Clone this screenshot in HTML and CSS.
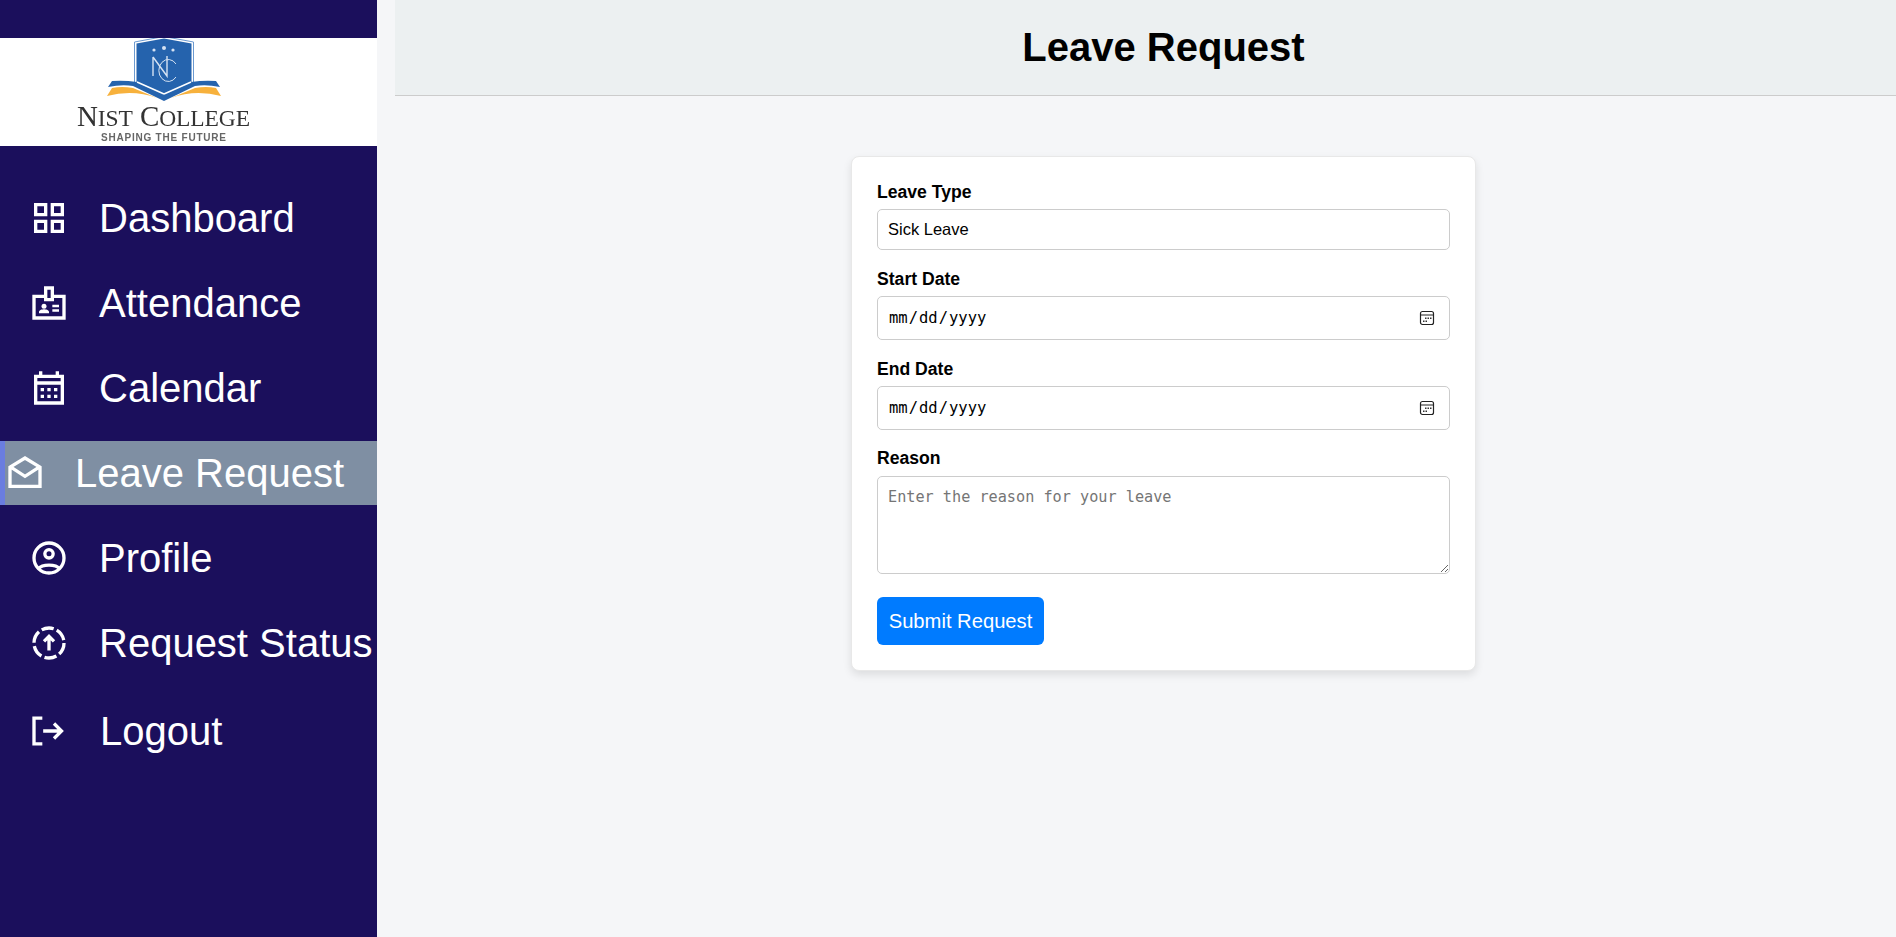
FILE: index.html
```html
<!DOCTYPE html>
<html lang="en">
<head>
    <meta charset="UTF-8">
    <title>Leave Request</title>
    <link rel="stylesheet" href="styles.css">
</head>
<body>
    <div class="layout">
        <aside class="sidebar">
            <div class="logo">
                <svg class="logo-img" width="210" height="108" viewBox="0 0 210 108">
                    <!-- shield -->
                    <path d="M74.500 4 L104 -1.500 L133.500 4 V45" fill="none" stroke="#6c9ad0" stroke-width="1"/>
                    <path d="M74.500 4 V45" fill="none" stroke="#6c9ad0" stroke-width="1"/>
                    <path d="M76.500 5.500 L104 0.500 L131.500 5.500 V44 L104 58 L76.500 44 Z" fill="#2563ad"/>
                    <circle cx="94" cy="12" r="1.600" fill="#d5e2f2"/>
                    <circle cx="104" cy="10" r="2" fill="#d5e2f2"/>
                    <circle cx="113" cy="12" r="1.600" fill="#d5e2f2"/>
                    <path d="M93 19 V38 M93 19 L107 38 V18" fill="none" stroke="#d5e2f2" stroke-width="1.400"/>
                    <path d="M116 26 A9.500 11 0 1 0 116 39" fill="none" stroke="#d5e2f2" stroke-width="1"/>
                    <!-- book -->
                    <path d="M52 43 Q64 42 77 44 L104 56 L131 44 Q144 42 156 43 L160 49 Q146 46 135 48 L104 63 L73 48 Q62 46 48 49 Z" fill="#2563ad"/>
                    <path d="M104 56 L77 44 M104 56 L131 44" stroke="#fff" stroke-width="1.500" fill="none"/>
                    <path d="M52 50 Q62 48 73 50 L97 60 Q73 51 47 58 Z M156 50 Q146 48 135 50 L111 60 Q135 51 161 58 Z" fill="#f7b13c"/>
                    <text class="logo-name" x="17" y="88" textLength="173">N<tspan class="logo-small">IST</tspan> C<tspan class="logo-small">OLLEGE</tspan></text>
                    <text class="logo-tag" x="41" y="103" textLength="125">SHAPING THE FUTURE</text>
                </svg>
            </div>
            <nav class="nav">
                <a class="nav-item" href="#">
                    <svg class="icon" viewBox="0 0 24 24"><path fill-rule="evenodd" d="M3 3h8v8H3V3zm2 2v4h4V5H5zm8-2h8v8h-8V3zm2 2v4h4V5h-4zM3 13h8v8H3v-8zm2 2v4h4v-4H5zm8-2h8v8h-8v-8zm2 2v4h4v-4h-4z"/></svg>
                    <span>Dashboard</span>
                </a>
                <a class="nav-item" href="#">
                    <svg class="icon" viewBox="0 0 24 24"><path fill-rule="evenodd" d="M2 22V7h7V2h6v5h7v15H2zm2-2h16V9h-5v2H9V9H4v11zm7-11h2V4h-2v5z"/><circle cx="9" cy="14" r="1.500"/><path d="M6 18.200v-.9c0-1 2-1.500 3-1.500s3 .5 3 1.500v.9H6zM14 13h4v1.500h-4zM14 15.800h4v1.500h-4z"/></svg>
                    <span>Attendance</span>
                </a>
                <a class="nav-item" href="#">
                    <svg class="icon" viewBox="0 0 24 24"><path fill-rule="evenodd" d="M3 22V4h3V2h2v2h8V2h2v2h3v18H3zm2-2h14V10H5v10zM5 8h14V6H5v2z"/><path d="M7 12h2v2H7zM11 12h2v2h-2zM15 12h2v2h-2zM7 16h2v2H7zM11 16h2v2h-2zM15 16h2v2h-2z"/></svg>
                    <span>Calendar</span>
                </a>
                <a class="nav-item nav-item-active" href="#">
                    <svg class="icon" viewBox="0 0 24 24"><path class="line" d="M3 8.500 12 3l9 5.500V20H3zM3.500 8.500 12 14l8.500-5.500"/></svg>
                    <span>Leave Request</span>
                </a>
                <a class="nav-item" href="#">
                    <svg class="icon" viewBox="0 0 24 24"><circle class="line" cx="12" cy="12" r="9"/><circle class="line" cx="12" cy="9.500" r="2.500"/><path class="line" d="M5.500 18.500C8 15.500 16 15.500 18.500 18.500"/></svg>
                    <span>Profile</span>
                </a>
                <a class="nav-item" href="#">
                    <svg class="icon" viewBox="0 0 24 24"><circle class="line dashed" cx="12" cy="12" r="9"/><path class="line" d="M12 16.500V8M9 11l3-3 3 3"/></svg>
                    <span>Request Status</span>
                </a>
                <a class="nav-item nav-item-logout" href="#">
                    <svg class="icon" viewBox="0 0 24 24"><path class="line" d="M8 4.300H3v15.400h5M8.500 12H19M15 7.500l4.500 4.500-4.500 4.500"/></svg>
                    <span>Logout</span>
                </a>
            </nav>
        </aside>

        <div class="main">
            <header class="page-header">
                <h1>Leave Request</h1>
            </header>
            <div class="content">
                <form class="card">
                    <div class="form-group">
                        <label for="type">Leave Type</label>
                        <input class="field field-text" type="text" id="type" value="Sick Leave">
                    </div>
                    <div class="form-group">
                        <label for="start">Start Date</label>
                        <input class="field field-date" type="date" id="start">
                    </div>
                    <div class="form-group form-group-tight">
                        <label for="end">End Date</label>
                        <input class="field field-date" type="date" id="end">
                    </div>
                    <div class="form-group">
                        <label class="label-wide" for="reason">Reason</label>
                        <textarea class="field field-area" id="reason" placeholder="Enter the reason for your leave"></textarea>
                    </div>
                    <button class="submit" type="submit">Submit Request</button>
                </form>
            </div>
        </div>
    </div>
</body>
</html>
```

FILE: styles.css
```css
* {
    box-sizing: border-box;
}
body {
    margin: 0;
    font-family: "Liberation Sans", Arial, sans-serif;
    background-color: #f5f6f8;
    color: #000;
}
.layout {
    display: flex;
    min-height: 100vh;
}

/* sidebar */
.sidebar {
    width: 377px;
    flex-shrink: 0;
    padding-top: 38px;
    background-color: #1b0f5c;
}
.logo {
    height: 108px;
    background: white;
    padding-left: 60px;
}
.logo-img {
    display: block;
    overflow: hidden;
    filter: blur(0.3px);
}
.logo-name {
    font-family: "Liberation Serif", serif;
    font-size: 29px;
    fill: #333;
}
.logo-small {
    font-size: 23.500px;
}
.logo-tag {
    font-family: "Liberation Sans", sans-serif;
    font-size: 10px;
    font-weight: bold;
    fill: #666;
}
.nav {
    display: flex;
    flex-direction: column;
    gap: 21px;
    margin-top: 40px;
}
.nav-item {
    display: flex;
    align-items: center;
    gap: 30px;
    height: 64px;
    padding-left: 29px;
    color: white;
    font-size: 40px;
    text-decoration: none;
    white-space: nowrap;
}
.nav-item-active {
    padding-left: 0;
    gap: 30px;
    border-left: 5px solid #6a7de0;
    background-color: #7f8fa3;
}
.nav-item-logout {
    margin-top: 3px;
    gap: 31px;
}
.icon {
    width: 40px;
    height: 40px;
    flex-shrink: 0;
    fill: white;
}
.line {
    fill: none;
    stroke: white;
    stroke-width: 2;
}
.dashed {
    stroke-dasharray: 7.400 2;
}

/* main */
.main {
    flex: 1;
    margin-left: 18px;
}
.page-header {
    height: 96px;
    padding-left: 36px;
    display: flex;
    align-items: center;
    justify-content: center;
    background-color: #ecf0f1;
    border-bottom: 1px solid #ccc;
}
h1 {
    margin: 0;
    font-size: 40px;
}
.content {
    padding: 60px 0 0 36px;
    display: flex;
    justify-content: center;
}
.card {
    width: 625px;
    height: 515px;
    padding: 25px;
    background: white;
    border-radius: 8px;
    box-shadow: 0 4px 8px rgba(0,0,0,0.1);
    border: 1px solid #e8e8e8;
}
.form-group {
    margin-bottom: 19px;
}
.form-group-tight {
    margin-bottom: 18px;
}
label {
    display: block;
    margin-bottom: 7px;
    font-size: 17.600px;
    font-weight: bold;
    line-height: 20px;
}
.label-wide {
    margin-bottom: 8px;
}
.field {
    display: block;
    width: 100%;
    padding: 10px;
    border: 1px solid #ccc;
    border-radius: 5px;
    background: white;
    color: #000;
}
.field-text {
    height: 41px;
    font-family: "Liberation Sans", Arial, sans-serif;
    font-size: 16.500px;
}
.field-date {
    height: 44px;
    font-family: "DejaVu Sans Mono", monospace;
    font-size: 15.500px;
}
.field-date::-webkit-calendar-picker-indicator {
    width: 16px;
    height: 16px;
    margin-right: 4px;
    padding: 0;
    background: url("data:image/svg+xml,%3Csvg xmlns='http://www.w3.org/2000/svg' viewBox='0 0 16 16'%3E%3Crect x='1.500' y='1.500' width='13' height='13' rx='2' fill='none' stroke='%23222' stroke-width='1.200'/%3E%3Cpath d='M2 5h12' stroke='%23222'/%3E%3Cpath d='M6 7.500h1.500V9H6zM8.500 7.500H10V9H8.500zM11 7.500h1.500V9H11zM4 10.500h1.500V12H4zM6.500 10.500H8V12H6.500z' fill='%23333'/%3E%3C/svg%3E") center / contain no-repeat;
}
.field-area {
    height: 98px;
    padding-top: 11px;
    font-family: "DejaVu Sans Mono", monospace;
    font-size: 15.200px;
}
.field-area::placeholder {
    color: #757575;
}
.submit {
    display: block;
    width: 167px;
    height: 48px;
    margin-top: 23px;
    padding: 0;
    border: none;
    border-radius: 6px;
    background-color: #007bff;
    color: white;
    font-family: "Liberation Sans", Arial, sans-serif;
    font-size: 20.200px;
    white-space: nowrap;
}
```
